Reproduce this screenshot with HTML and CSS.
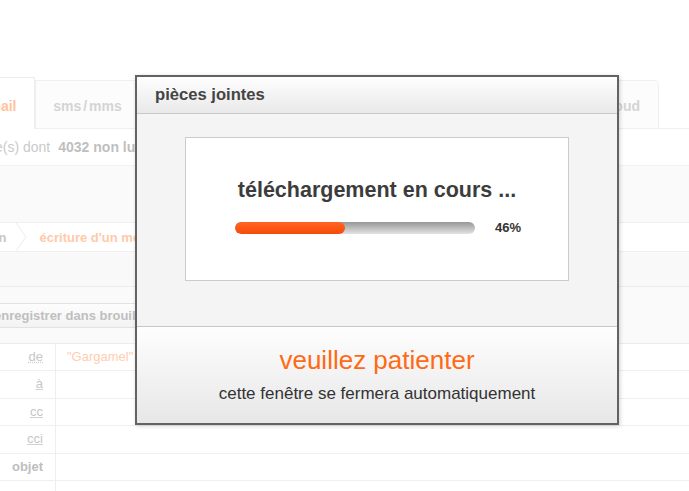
FILE: index.html
```html
<!DOCTYPE html>
<html lang="fr">
<head>
<meta charset="utf-8">
<title>pièces jointes</title>
<link rel="stylesheet" href="styles.css">
</head>
<body>
<div class="page">
  <div class="tabs">
    <div class="tab tab-active">mail</div>
    <div class="tab tab-sms">sms<span class="slash">/</span>mms</div>
    <div class="tabs-fill"></div>
    <div class="tab tab-cloud">mon cloud</div>
  </div>
  <div class="info"><span class="info-count">e(s) dont</span><b>4032 non lus</b></div>
  <div class="panel"></div>
  <div class="crumbs">
    <span class="crumb-prev">réception</span>
    <svg class="chev" width="10" height="28" viewBox="0 0 10 28"><polyline points="0,0 10,14 0,28" fill="none" stroke="#ececec" stroke-width="1"/></svg>
    <span class="crumb-cur">écriture d'un message</span>
  </div>
  <div class="strip"></div>
  <div class="toolbar"><span class="btn">enregistrer dans brouillon</span></div>
  <div class="form">
    <div class="row"><span class="label"><u class="dotted">de</u></span><span class="value from">"Gargamel" &lt;gargamel@orange.fr&gt;</span></div>
    <div class="row"><span class="label"><u>à</u></span><span class="value"></span></div>
    <div class="row"><span class="label"><u>cc</u></span><span class="value"></span></div>
    <div class="row"><span class="label"><u>cci</u></span><span class="value"></span></div>
    <div class="row"><span class="label"><b>objet</b></span><span class="value"></span></div>
    <div class="row"><span class="label"></span><span class="value"></span></div>
  </div>

  <div class="modal">
    <div class="modal-head">pièces jointes</div>
    <div class="modal-body">
      <div class="card">
        <h2>téléchargement en cours ...</h2>
        <div class="progress">
          <div class="bar"><div class="fill" style="width:46%"></div></div>
          <span class="pct">46%</span>
        </div>
      </div>
    </div>
    <div class="modal-foot">
      <p class="wait">veuillez patienter</p>
      <p class="note">cette fenêtre se fermera automatiquement</p>
    </div>
  </div>
</div>
</body>
</html>
```
FILE: styles.css
```css
html, body {
  margin: 0;
  padding: 0;
  background: #fff;
}
body {
  font-family: "Liberation Sans", Arial, sans-serif;
}
.page {
  position: relative;
  width: 689px;
  height: 491px;
  overflow: hidden;
  background: #fff;
}

/* tabs */
.tabs {
  display: flex;
  align-items: flex-end;
  padding-top: 77px;
  height: 51px;
  border-bottom: 1px solid #efefef;
}
.tab {
  box-sizing: border-box;
  height: 48px;
  border: 1px solid #f0f0f0;
  border-bottom: none;
  background: #fcfcfc;
  font-size: 14px;
  font-weight: bold;
  color: #d4d4d4;
  display: flex;
  align-items: center;
  justify-content: center;
  padding-top: 3px;
  white-space: nowrap;
}
.tab-active {
  height: 52px;
  margin-bottom: -1px;
  margin-left: -30px;
  width: 65px;
  background: #fff;
  color: #ffc29e;
  border-color: #ececec;
  padding-top: 4px;
}
.tab-sms {
  width: 105px;
}
.slash {
  margin: 0 2px;
}
.tabs-fill {
  flex: 1;
}
.tab-cloud {
  width: 106px;
  margin-right: 30px;
  border-radius: 5px 5px 0 0;
  justify-content: flex-end;
  padding-right: 18px;
}

/* info line */
.info {
  height: 36px;
  line-height: 36px;
  border-bottom: 1px solid #f2f2f2;
  font-size: 14px;
  color: #cacaca;
  white-space: nowrap;
}
.info-count {
  margin-left: -5px;
}
.info b {
  color: #bfbfbf;
  margin-left: 8px;
}

.panel {
  height: 56px;
  background: #fafafa;
  border-bottom: 1px solid #efefef;
}

/* breadcrumb */
.crumbs {
  height: 28px;
  display: flex;
  align-items: center;
  border-bottom: 1px solid #efefef;
  font-size: 13px;
  font-weight: bold;
  background: #fff;
  white-space: nowrap;
}
.crumb-prev {
  margin-left: -52px;
  color: #c8c8c8;
}
.chev {
  margin-left: 9px;
  flex: none;
}
.crumb-cur {
  margin-left: 14px;
  color: #ffc9aa;
}

.strip {
  height: 34px;
  background: #f9f9f9;
  border-bottom: 1px solid #ececec;
}

/* toolbar */
.toolbar {
  height: 40px;
  padding-top: 16px;
  background: #fafafa;
  border-bottom: 1px solid #ececec;
  white-space: nowrap;
}
.btn {
  box-sizing: border-box;
  height: 25px;
  display: inline-flex;
  align-items: center;
  margin-left: -20px;
  padding: 0 13px;
  border: 1px solid #e2e2e2;
  background: linear-gradient(#fdfdfd, #f3f3f3);
  font-size: 13px;
  font-weight: bold;
  color: #bfbfbf;
}

/* form */
.row {
  display: grid;
  grid-template-columns: 56px 1fr;
  height: 26.4px;
  border-bottom: 1px solid #efefef;
  font-size: 13px;
}
.label {
  border-right: 1px solid #efefef;
  text-align: right;
  padding-right: 12px;
  line-height: 26px;
  color: #c6c6c6;
}
.label u {
  text-decoration: underline;
  text-decoration-color: #d0d0d0;
}
.label u.dotted {
  text-decoration-style: dotted;
}
.label b {
  color: #bebebe;
}
.value {
  padding-left: 11px;
  line-height: 26px;
  white-space: nowrap;
}
.from {
  color: #ffcdb2;
}

/* modal */
.modal {
  position: absolute;
  left: 135px;
  top: 75px;
  width: 484px;
  height: 350px;
  box-sizing: border-box;
  border: 2px solid #636363;
  box-shadow: 1px 1px 4px rgba(0, 0, 0, 0.18);
  display: flex;
  flex-direction: column;
  background: #f4f4f4;
}
.modal-head {
  flex: none;
  height: 36px;
  border-bottom: 1px solid #c8c8c8;
  background: linear-gradient(#fefefe, #e9e9e9);
  padding-left: 18px;
  font-size: 16.6px;
  font-weight: bold;
  color: #444;
  line-height: 36px;
}
.modal-body {
  flex: none;
  height: 212px;
  box-sizing: border-box;
  padding: 23px 48px 0;
  background: #f4f4f4;
}
.card {
  height: 144px;
  box-sizing: border-box;
  border: 1px solid #cbcbcb;
  background: #fff;
  padding-top: 40px;
}
.card h2 {
  margin: 0;
  text-align: center;
  font-size: 21.5px;
  font-weight: bold;
  color: #3c3c3c;
  line-height: 24px;
}
.progress {
  display: flex;
  align-items: center;
  margin: 18px 0 0 49px;
}
.bar {
  width: 240px;
  height: 12px;
  border-radius: 6px;
  background: linear-gradient(#979797, #e3e3e3);
  overflow: hidden;
  flex: none;
}
.fill {
  height: 100%;
  border-radius: 6px;
  background: linear-gradient(#ff6526, #ff5713 50%, #f24c0c);
}
.pct {
  margin-left: 20px;
  font-size: 13px;
  font-weight: bold;
  color: #333;
  line-height: 15px;
}
.modal-foot {
  flex: 1;
  border-top: 1px solid #c6c6c6;
  background: linear-gradient(#fefefe, #e7e7e7);
  text-align: center;
  padding-top: 18px;
}
.modal-foot p {
  margin: 0;
}
.wait {
  font-size: 26px;
  line-height: 30px;
  color: #ff6a14;
}
.modal-foot .note {
  margin-top: 9px;
  font-size: 17px;
  line-height: 20px;
  color: #333;
}
```
